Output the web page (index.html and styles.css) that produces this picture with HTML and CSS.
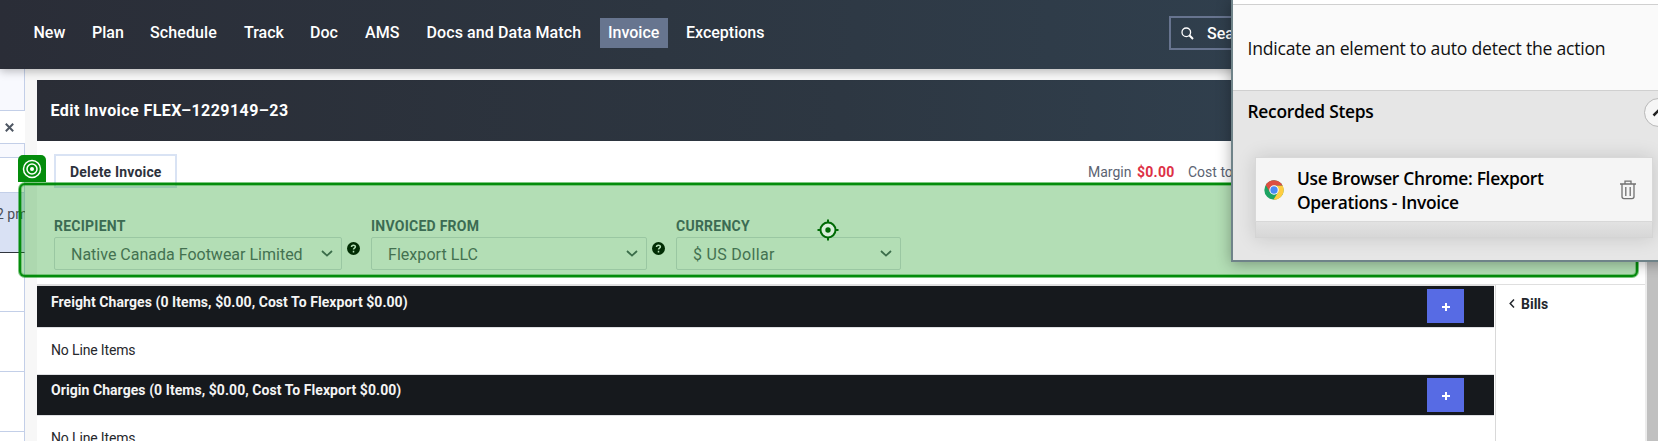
FILE: index.html
```html
<!DOCTYPE html>
<html lang="en">
<head>
<meta charset="utf-8">
<title>Edit Invoice</title>
<link rel="stylesheet" href="styles.css">
</head>
<body>
<div class="app">
  <header class="topbar">
    <nav class="nav">
      <a class="nav-new">New</a><a class="nav-plan">Plan</a><a class="nav-schedule">Schedule</a><a class="nav-track">Track</a><a class="nav-doc">Doc</a><a class="nav-ams">AMS</a><a class="nav-match">Docs and Data Match</a><a class="nav-invoice active">Invoice</a><a class="nav-exceptions">Exceptions</a>
    </nav>
    <div class="search">
      <svg width="13" height="13" viewBox="0 0 13 13" fill="none" stroke="#fff"><circle cx="5.3" cy="5.3" r="4.3" stroke-width="1.3"/><path d="M8.3 8.3 12 12" stroke-width="2"/></svg>
      <span>Sea</span>
    </div>
  </header>
  <div class="body">
    <aside class="sidebar">
      <div class="side-top"></div>
      <div class="side-tab"><svg width="9" height="9" viewBox="0 0 9 9" stroke="#4f5763" stroke-width="2"><path d="M.8.8 8.2 8.2M8.2.8.8 8.2"/></svg></div>
      <div class="side-strip"></div>
      <div class="side-cell short"></div>
      <div class="side-cell selected"><span>2 pm</span></div>
      <div class="side-cell"></div>
      <div class="side-cell next"></div>
      <div class="side-cell next"></div>
      <div class="side-cell"></div>
    </aside>
    <main class="main">
      <div class="title-bar"><span>Edit Invoice FLEX–1229149–23</span></div>
      <div class="actions">
        <button class="delete"><span>Delete Invoice</span></button>
        <div class="totals"><span class="margin">Margin</span><b>$0.00</b><span class="cost">Cost to</span></div>
      </div>
      <div class="fields">
        <div class="field recipient">
          <label>RECIPIENT</label>
          <div class="field-row"><div class="select"><span>Native Canada Footwear Limited</span><svg class="chev" width="12" height="7" viewBox="0 0 12 7"><path d="M1 1 6 5.6 11 1"/></svg></div>
          <svg class="help" width="13" height="13" viewBox="0 0 13 13"><circle cx="6.5" cy="6.5" r="6.5"/><path d="M4.5 5C4.5 2.6 8.4 2.6 8.4 4.8 8.4 6.1 6.5 6.1 6.5 7.6M6.5 8.7v1.7"/></svg></div>
        </div>
        <div class="field from">
          <label>INVOICED FROM</label>
          <div class="field-row"><div class="select"><span>Flexport LLC</span><svg class="chev" width="12" height="7" viewBox="0 0 12 7"><path d="M1 1 6 5.6 11 1"/></svg></div>
          <svg class="help" width="13" height="13" viewBox="0 0 13 13"><circle cx="6.5" cy="6.5" r="6.5"/><path d="M4.5 5C4.5 2.6 8.4 2.6 8.4 4.8 8.4 6.1 6.5 6.1 6.5 7.6M6.5 8.7v1.7"/></svg></div>
        </div>
        <div class="field currency">
          <label>CURRENCY</label>
          <div class="field-row"><div class="select"><span>$ US Dollar</span><svg class="chev" width="12" height="7" viewBox="0 0 12 7"><path d="M1 1 6 5.6 11 1"/></svg></div></div>
        </div>
      </div>
      <div class="lower">
        <section class="charges">
          <div class="charge-head freight"><span>Freight Charges (0 Items, $0.00, Cost To Flexport $0.00)</span><button class="add"><svg width="8" height="8" viewBox="0 0 8 8"><path d="M4 0v8M0 4h8"/></svg></button></div>
          <div class="charge-body"><span>No Line Items</span></div>
          <div class="charge-head origin"><span>Origin Charges (0 Items, $0.00, Cost To Flexport $0.00)</span><button class="add"><svg width="8" height="8" viewBox="0 0 8 8"><path d="M4 0v8M0 4h8"/></svg></button></div>
          <div class="charge-body"><span>No Line Items</span></div>
        </section>
        <aside class="bills"><svg width="6" height="9" viewBox="0 0 6 9" fill="none" stroke="#23272d" stroke-width="1.5"><path d="M5 .6 1.2 4.5 5 8.4"/></svg><span>Bills</span></aside>
      </div>
    </main>
    <div class="scrollbar"></div>
  </div>

  <div class="highlight"></div>
  <div class="badge"><svg width="20" height="20" viewBox="0 0 20 20" fill="none" stroke="#fff" stroke-width="1.5"><circle cx="10" cy="10" r="8.5"/><circle cx="10" cy="10" r="5"/><circle cx="10" cy="10" r="2" fill="#fff" stroke="none"/></svg></div>
  <svg class="crosshair" width="22" height="22" viewBox="0 0 22 22" fill="none" stroke="#006a05" stroke-width="2"><circle cx="11" cy="11" r="7.5" fill="#d9eeda"/><path d="M11 .5V4M11 18v3.5M.5 11H4M18 11h3.5"/><circle cx="11" cy="11" r="2.7" fill="#006a05" stroke="none"/></svg>

  <div class="recorder">
    <div class="rec-top"></div>
    <div class="rec-hint"><span>Indicate an element to auto detect the action</span></div>
    <div class="rec-steps">
      <div class="rec-title"><span>Recorded Steps</span></div>
      <div class="stack">
        <div class="step">
          <svg class="chrome" width="20" height="20" viewBox="0 0 20 20"><circle cx="10" cy="10" r="9.7" fill="#1da362"/><path d="M10 10V5.5H18.6A9.7 9.7 0 0 1 9.4 19.7L14 12.2Z" fill="#ffcd40"/><path d="M1.7 5A9.7 9.7 0 0 1 18.6 5.5H10L6 12.2Z" fill="#dc4e41"/><circle cx="10" cy="10" r="4.7" fill="#fff"/><circle cx="10" cy="10" r="3.7" fill="#4a8af4"/></svg>
          <p><span class="l1">Use Browser Chrome: Flexport</span><br><span class="l2">Operations - Invoice</span></p>
          <svg class="trash" width="16" height="20" viewBox="0 0 16 20" fill="none" stroke="#707070" stroke-width="1.3"><path d="M0 4H16M5 4V1.2H11V4M2 4V16.6Q2 18.6 4 18.6H12Q14 18.6 14 16.6V4M5.8 7V16M10.2 7V16"/></svg>
        </div>
        <div class="under"></div>
      </div>
    </div>
    <div class="toggle"><svg width="14" height="9" viewBox="0 0 14 9" fill="none" stroke="#222" stroke-width="2.6"><path d="M1.5 7.5 7 2 12.5 7.5"/></svg></div>
  </div>
</div>
</body>
</html>
```
FILE: styles.css
```css
* { box-sizing: border-box; }
body { margin: 0; font-family: Roboto, "Liberation Sans", sans-serif; overflow: hidden; }
button { font: inherit; border: 0; padding: 0; }
span { white-space: nowrap; }
svg { display: block; flex: none; }
.app { position: relative; width: 1658px; height: 441px; overflow: hidden; background: #f7f7f7; display: flex; flex-direction: column; }

.topbar { position: relative; z-index: 1; flex: none; height: 69px; padding-left: 25.5px; display: flex; align-items: flex-start; background: linear-gradient(90deg, #2a2d37, #2d3641 40%, #303f4d 75%); box-shadow: 0 2px 9px rgba(0,0,0,.28); }
.nav { display: flex; width: 1143.5px; padding-top: 18px; }
.nav a { height: 30px; line-height: 30px; padding: 0 8px; margin-right: 10.5px; color: #fff; font-size: 16px; font-weight: 500; white-space: nowrap; flex: none; }
.nav .nav-new { width: 48px; }
.nav .nav-plan { width: 47.5px; }
.nav .nav-schedule { width: 83.5px; letter-spacing: .1px; }
.nav .nav-track { width: 55.5px; }
.nav .nav-doc { width: 44.5px; }
.nav .nav-ams { width: 51px; letter-spacing: .1px; }
.nav .nav-match { width: 171px; letter-spacing: .1px; }
.nav .active { width: 68px; margin-right: 10px; background: #67758f; }
.search { margin-top: 16px; width: 200px; height: 34px; border: 2px solid #67748f; padding-left: 10px; display: flex; align-items: center; gap: 13px; color: #fff; font-size: 16px; font-weight: 500; }

.body { flex: 1; display: flex; min-height: 0; }
.sidebar { flex: none; width: 25px; margin-right: 12px; background: #fff; overflow: hidden; }
.sidebar > div { border-right: 1px solid #c3cfe8; border-bottom: 1px solid #c3cfe8; }
.side-top { height: 42px; background: #f8f9fe; }
.sidebar .side-tab { height: 33px; border-right: 0; display: flex; align-items: center; padding-left: 5px; }
.side-strip { height: 14px; background: #f8f9fe; }
.side-cell { height: 59px; }
.side-cell.short { height: 35px; }
.side-cell.next { height: 60px; }
.sidebar .selected { height: 60px; background: #d9e1f4; border-bottom-color: #30353d; padding-top: 11px; font-size: 14px; line-height: 20px; color: #4a4f59; }
.selected span { margin-left: -4px; }

.main { width: 1608px; flex: none; margin-top: 11px; background: #fff; display: flex; flex-direction: column; }
.title-bar { flex: none; height: 61px; padding-left: 13.5px; line-height: 61px; letter-spacing: .44px; color: #fff; font-size: 16px; font-weight: 700; background: linear-gradient(90deg, #2a2d36, #2d3742 50%, #303f4d 75%); }
.actions { flex: none; height: 51px; display: flex; padding: 13px 0 0 17px; }
.delete { width: 123px; height: 34px; border: 2px solid #d9e3f4; background: #fff; color: #2d323c; font-size: 14px; font-weight: 700; letter-spacing: .18px; text-align: left; padding-left: 14px; padding-top: 1px; }
.totals { margin-left: 911px; padding-top: 8px; display: flex; font-size: 14px; line-height: 20px; color: #5b6372; }
.totals .margin { width: 49px; }
.totals b { width: 51px; color: #dd3045; letter-spacing: .25px; }

.fields { flex: none; height: 92px; padding: 24px 0 0 17px; display: flex; }
.field label { display: block; height: 21px; line-height: 20px; font-size: 14px; font-weight: 700; letter-spacing: .25px; color: #555b73; }
.field { width: 317px; }
.field.from { width: 305px; }
.field-row { display: flex; gap: 5px; }
.select { width: 288px; height: 33px; border: 1px solid #dcdfe4; border-radius: 2px; padding: 0 8px 0 16px; display: flex; align-items: center; justify-content: space-between; font-size: 16px; color: #5f6470; }
.from .select { width: 276px; }
.from .select span { letter-spacing: .05px; }
.currency .select { width: 225px; }
.currency .select span { letter-spacing: .3px; }
.select span { position: relative; top: 1px; }
.chev { fill: none; stroke: #535e66; stroke-width: 1.8; }
.help { margin-top: 5px; }
.help circle { fill: #000; }
.help path { fill: none; stroke: #fff; stroke-width: 1.5; }

.lower { flex: 1; display: flex; border-top: 1px solid #dfdfdf; min-height: 0; overflow: hidden; }
.charges { width: 1457px; flex: none; border-top: 1px solid #dfdfdf; }
.charge-head { height: 41px; padding: 3px 30px 0 14px; background: #16191d; display: flex; justify-content: space-between; color: #f4f4f4; font-size: 14px; font-weight: 700; letter-spacing: .06px; }
.charge-head.origin { height: 40px; }
.charge-head > span { line-height: 26px; }
.origin > span { line-height: 25px; }
.add { width: 37px; height: 34px; background: #576be4; display: flex; align-items: center; justify-content: center; padding-top: 2px; }
.add path { stroke: #fff; stroke-width: 2; }
.charge-body { height: 48px; border: solid #dfe0e3; border-width: 1px 0; padding-top: 11px; font-size: 14px; line-height: 22px; letter-spacing: -.15px; color: #26282c; }
.charge-body span { margin-left: 14px; }
.bills { margin-left: 1px; flex: 1; border-left: 1px solid #d9d9d9; padding: 9px 0 0 13px; display: flex; gap: 6px; font-size: 14px; line-height: 20px; font-weight: 700; color: #23272d; }
.bills svg { margin-top: 5px; }
.scrollbar { width: 13px; flex: none; background: #c0c0c0; border-left: 2px solid #ececec; }

.highlight { position: absolute; z-index: 2; left: 18px; top: 182px; width: 1621px; height: 96px; border-radius: 7px; background: rgba(2,145,10,.3); border: 1px solid rgba(2,145,10,.3); box-shadow: inset 0 0 0 2px #048c0c, inset 0 0 0 3px rgba(2,145,10,.35); }
.badge { position: absolute; z-index: 3; left: 18px; top: 155px; width: 28px; height: 27px; border-radius: 5px 5px 0 0; background: #048c0c; display: flex; align-items: center; justify-content: center; }
.crosshair { position: absolute; z-index: 3; left: 817px; top: 219px; }

.recorder { position: absolute; z-index: 4; left: 1231px; top: 0; width: 440px; height: 262px; border: solid #6f8389; border-width: 0 0 2px 2px; background: #e6e6e6; box-shadow: 0 2px 14px rgba(0,0,0,.32); display: flex; flex-direction: column; font-family: "Open Sans", "Noto Sans", sans-serif; color: #111; font-size: 17.6px; }
.rec-top { flex: none; height: 5px; background: #fff; border-bottom: 1px solid #d0d0d0; }
.rec-hint { flex: none; height: 86px; background: #fafafa; border-bottom: 1px solid #d0d0d0; line-height: 87px; padding-left: 14.5px; letter-spacing: -.23px; }
.rec-title { height: 66px; line-height: 41px; padding-left: 14.5px; font-size: 17.4px; font-weight: 600; letter-spacing: -.27px; color: #000; }
.stack { margin-left: 22px; width: 398px; box-shadow: 0 0 18px rgba(0,0,0,.14); }
.step { height: 65px; border: 1px solid #d8d8d8; background: #f5f5f5; display: flex; align-items: center; padding-left: 8px; }
.step p { margin: 0 0 0 13px; width: 323px; line-height: 24px; font-size: 17.4px; font-weight: 600; letter-spacing: -.33px; color: #000; }
.under { height: 16px; border: 1px solid #d4d4d4; border-top: 0; background: linear-gradient(#e2e2e2, #d7d7d7); }
.toggle { position: absolute; left: 411px; top: 98px; width: 29px; height: 29px; border: 1px solid #b7b7b7; border-radius: 50%; background: #f6f6f6; display: flex; align-items: center; justify-content: center; }
```
